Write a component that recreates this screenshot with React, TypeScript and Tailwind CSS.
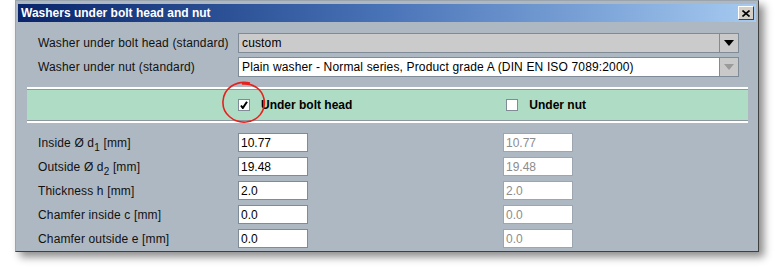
import { ReactNode } from "react";

const font = { fontFamily: '"Liberation Sans", Arial, sans-serif' };

function Combo({ value, gray, disabledArrow }: { value: string; gray?: boolean; disabledArrow?: boolean }) {
  return (
    <div className="flex h-[20px] w-[501px]">
      <div
        className={`flex-1 flex items-center pl-[3px] border border-[#7f8c98] text-[12px] tracking-[0.15px] text-black ${
          gray ? "bg-[#cbcbcb]" : "bg-white"
        }`}
      >
        {value}
      </div>
      <div className="w-[19px] flex items-center justify-center border border-[#7f8c98] border-l-0 bg-[#c9c9c9]">
        <svg width="10" height="6" viewBox="0 0 10 6">
          <path d="M0 0 H10 L5 6 Z" fill={disabledArrow ? "#9a9a9a" : "#000"} />
        </svg>
      </div>
    </div>
  );
}

function Field({ value, disabled }: { value: string; disabled?: boolean }) {
  return (
    <div
      className={`w-[70px] h-[19px] flex items-center pl-[2px] bg-white border text-[12px] ${
        disabled ? "border-[#9ba6b1] text-[#8c8c8c]" : "border-[#7f8c98] text-black"
      }`}
    >
      {value}
    </div>
  );
}

function Check({ checked, label }: { checked?: boolean; label: string }) {
  return (
    <div className="flex items-center gap-[11px]">
      <div className="w-[12px] h-[12px] bg-white border border-[#7f8c98] flex items-center justify-center">
        {checked && (
          <svg width="8" height="8" viewBox="0 0 8 8">
            <path d="M1 4.5 L2.8 7 L7 0.8" stroke="#000" strokeWidth="2" fill="none" />
          </svg>
        )}
      </div>
      <span className="text-[12px] font-bold text-black">{label}</span>
    </div>
  );
}

function Sub({ children }: { children: ReactNode }) {
  return <span className="text-[10px] relative top-[4px] leading-none">{children}</span>;
}

function Row({ label, left, right }: { label: ReactNode; left: string; right: string }) {
  return (
    <div className="flex items-center h-[19px]">
      <div className="w-[200px] text-[12px] tracking-[0.15px] text-[#111]">{label}</div>
      <Field value={left} />
      <div className="w-[195px]" />
      <Field value={right} disabled />
    </div>
  );
}

export default function App() {
  return (
    <div className="w-[776px] h-[267px] bg-white relative overflow-hidden" style={font}>
      <div className="ml-[15px] w-[744px] h-[252px] border border-l-[#9aa4ae] border-t-[#9aa4ae] border-r-[#404040] border-b-[#404040] bg-[#aeb8c2] shadow-[5px_5px_8px_rgba(0,0,0,0.45)] p-[2px] flex flex-col">
        <div className="h-[18px] mt-[1px] flex items-center justify-between pl-[3px] pr-[2px] bg-gradient-to-r from-[#0a246a] via-[#4a74b8] to-[#a6caf0]">
          <span className="text-white font-bold text-[12px]">Washers under bolt head and nut</span>
          <div className="w-[16px] h-[14px] bg-[#d4d0c8] border border-t-white border-l-white border-r-[#404040] border-b-[#404040] flex items-center justify-center">
            <svg width="8" height="7" viewBox="0 0 8 7">
              <path d="M0.5 0.5 L7.5 6.5 M7.5 0.5 L0.5 6.5" stroke="#000" strokeWidth="1.6" />
            </svg>
          </div>
        </div>

        <div className="pl-[20px] pt-[11px] flex flex-col gap-[4px]">
          <div className="flex items-center">
            <div className="w-[200px] text-[12px] tracking-[0.15px] text-[#111]">Washer under bolt head (standard)</div>
            <Combo value="custom" gray />
          </div>
          <div className="flex items-center">
            <div className="w-[200px] text-[12px] tracking-[0.15px] text-[#111]">Washer under nut (standard)</div>
            <Combo value="Plain washer - Normal series, Product grade A (DIN EN ISO 7089:2000)" disabledArrow />
          </div>
        </div>

        <div className="ml-[9px] mr-[8px] mt-[10px] h-[36px] border-t-2 border-b-2 border-t-white border-b-white flex">
          <div className="flex-1 bg-[#afdcc4] border-t border-b border-t-[#8e979f] border-b-[#8e979f] flex items-center">
            <div className="w-[211px]" />
            <Check checked label="Under bolt head" />
            <div className="w-[154px]" />
            <Check label="Under nut" />
          </div>
        </div>

        <div className="pl-[20px] pt-[10px] flex flex-col gap-[5px]">
          <Row
            label={
              <span>
                Inside Ø d<Sub>1</Sub> [mm]
              </span>
            }
            left="10.77"
            right="10.77"
          />
          <Row
            label={
              <span>
                Outside Ø d<Sub>2</Sub> [mm]
              </span>
            }
            left="19.48"
            right="19.48"
          />
          <Row label="Thickness h [mm]" left="2.0" right="2.0" />
          <Row label="Chamfer inside c [mm]" left="0.0" right="0.0" />
          <Row label="Chamfer outside e [mm]" left="0.0" right="0.0" />
        </div>
      </div>

      <svg className="absolute left-[220px] top-[80px]" width="48" height="46" viewBox="0 0 48 46">
        <path
          d="M30 3 C16 0 4 8 3 21 C2 34 14 43 26 42 C38 41 46 31 44 19 C42 9 33 3 22 4"
          stroke="#e8201c"
          strokeWidth="1.6"
          fill="none"
        />
      </svg>
    </div>
  );
}
